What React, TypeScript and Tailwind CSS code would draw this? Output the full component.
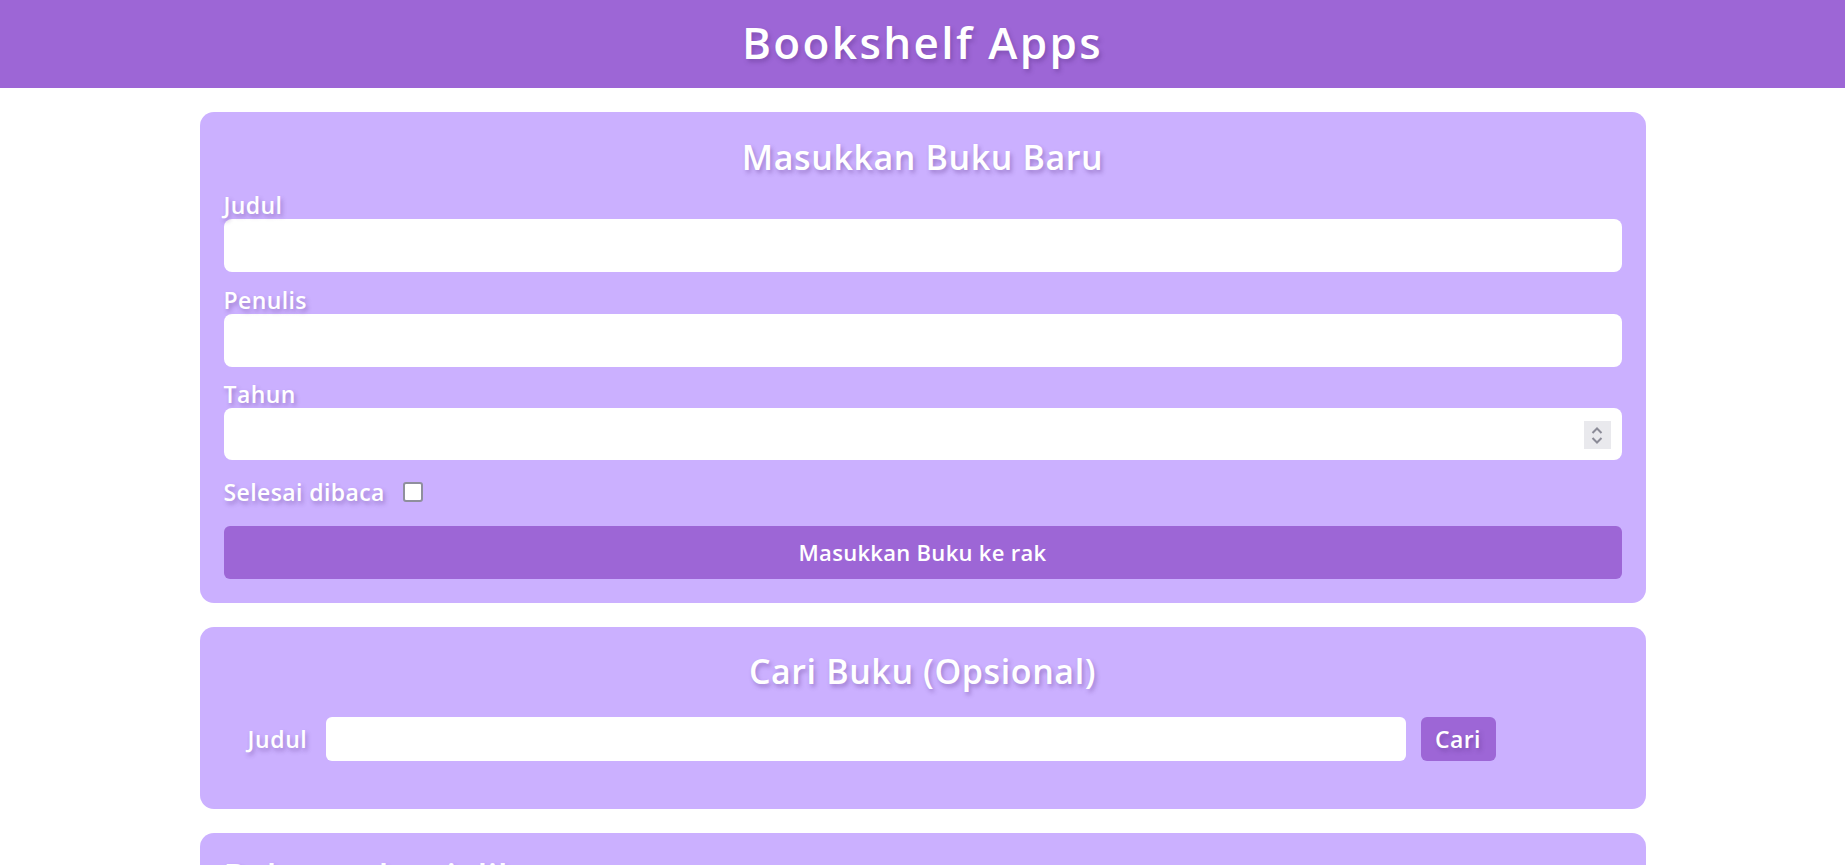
import { useState } from "react";

const shadow = "[text-shadow:2px_3px_4px_rgba(80,40,120,0.35)]";

export default function App() {
  const [title, setTitle] = useState("");
  const [author, setAuthor] = useState("");
  const [year, setYear] = useState("");
  const [done, setDone] = useState(false);
  const [query, setQuery] = useState("");

  return (
    <div className="min-h-screen bg-white font-['Open_Sans','Lato',sans-serif] text-white">
      {/* header */}
      <header className="h-[88px] bg-[#9d66d6] flex items-center justify-center pb-1">
        <h1 className={`text-[44px] font-semibold leading-none tracking-[2.4px] ${shadow}`}>Bookshelf Apps</h1>
      </header>

      <main className="w-[1446px] mx-auto pt-6 flex flex-col gap-6">
        {/* input section */}
        <section className="bg-[#cbb0ff] rounded-[14px] px-6 pt-5 pb-6">
          <h2 className={`text-[34px] leading-[50px] font-semibold tracking-[0.6px] text-center ${shadow}`}>Masukkan Buku Baru</h2>
          <form className="mt-[9px]" onSubmit={e => e.preventDefault()}>
            <div>
              <label className={`block text-[23px] leading-[28px] font-semibold tracking-[0.4px] ${shadow}`}>Judul</label>
              <input
                value={title}
                onChange={e => setTitle(e.target.value)}
                className="block w-full h-[53px] rounded-lg bg-white px-3 text-black text-lg outline-none"
              />
            </div>
            <div className="mt-[14px]">
              <label className={`block text-[23px] leading-[28px] font-semibold tracking-[0.4px] ${shadow}`}>Penulis</label>
              <input
                value={author}
                onChange={e => setAuthor(e.target.value)}
                className="block w-full h-[53px] rounded-lg bg-white px-3 text-black text-lg outline-none"
              />
            </div>
            <div className="mt-[13px]">
              <label className={`block text-[23px] leading-[28px] font-semibold tracking-[0.4px] ${shadow}`}>Tahun</label>
              <div className="relative">
                <input
                  value={year}
                  onChange={e => setYear(e.target.value)}
                  className="block w-full h-[52px] rounded-lg bg-white px-3 text-black text-lg outline-none"
                />
                {/* spinner */}
                <div className="absolute right-[11px] top-[13px] w-[27px] h-[28px] bg-[#e9e9ed] flex flex-col items-center justify-center gap-[3px]">
                  <svg width="12" height="7" viewBox="0 0 12 7" fill="none">
                    <path d="M1.5 6L6 1.5L10.5 6" stroke="#8b8b97" strokeWidth="2" />
                  </svg>
                  <svg width="12" height="7" viewBox="0 0 12 7" fill="none">
                    <path d="M1.5 1L6 5.5L10.5 1" stroke="#8b8b97" strokeWidth="2" />
                  </svg>
                </div>
              </div>
            </div>
            <div className="mt-[18px] h-[28px] flex items-center gap-[15px]">
              <label className={`w-[164px] text-[23px] leading-[28px] font-semibold tracking-[0.4px] whitespace-nowrap ${shadow}`}>Selesai dibaca</label>
              <input
                type="checkbox"
                checked={done}
                onChange={e => setDone(e.target.checked)}
                className="appearance-none w-5 h-5 rounded-[3px] border-2 border-[#8f8f9d] bg-white"
              />
            </div>
            <button
              type="submit"
              className="mt-5 w-full h-[53px] rounded-md bg-[#9d66d6] text-white text-[22px] font-semibold tracking-[0.3px]"
            >
              Masukkan Buku ke rak
            </button>
          </form>
        </section>

        {/* search section */}
        <section className="bg-[#cbb0ff] rounded-[14px] px-6 pt-[19px] pb-12">
          <h2 className={`text-[34px] leading-[50px] font-semibold tracking-[0.6px] text-center ${shadow}`}>Cari Buku (Opsional)</h2>
          <form className="mt-[21px] pl-6 flex items-center gap-[15px]" onSubmit={e => e.preventDefault()}>
            <label className={`w-[63px] text-[23px] font-semibold tracking-[0.6px] ${shadow}`}>Judul</label>
            <input
              value={query}
              onChange={e => setQuery(e.target.value)}
              className="w-[1080px] h-[44px] rounded-md bg-white px-3 text-black text-lg outline-none"
            />
            <button className={`w-[75px] h-[44px] rounded-md bg-[#9d66d6] text-[23px] font-semibold tracking-[0.4px] ${shadow}`}>
              Cari
            </button>
          </form>
        </section>

        {/* unfinished shelf */}
        <section className="bg-[#cbb0ff] rounded-[14px] px-6 pt-[18px] pb-6">
          <h2 className={`text-[34px] leading-[50px] font-semibold tracking-[0.6px] ${shadow}`}>Belum selesai dibaca</h2>
          <div className="h-40" />
        </section>
      </main>
    </div>
  );
}
